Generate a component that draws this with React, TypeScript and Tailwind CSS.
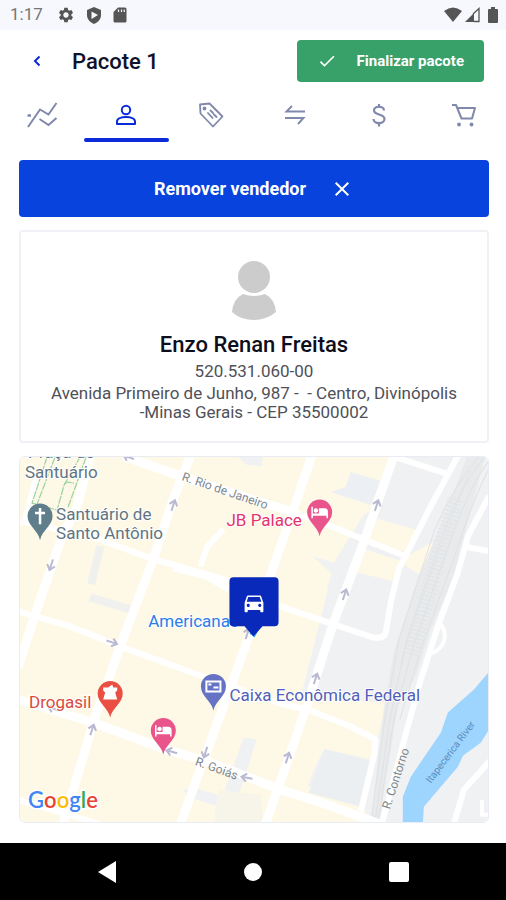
import React, { useState } from 'react';
import { MdCheck, MdClose, MdDirectionsCar, MdHotel, MdSettings } from 'react-icons/md';

type TabId = 'RESUMO' | 'VENDEDOR' | 'OFERTAS' | 'TROCAS' | 'VALORES' | 'CARRINHO';

const ChartIcon = () => (
  <svg width="32" height="28" viewBox="0 0 32 28" fill="none" stroke="currentColor" strokeWidth="2">
    <path d="M2 26 L14 8.500 L22.500 13.500 L30.500 2" />
    <path d="M13.500 18 L22.500 24 L30.500 17" />
    <path d="M1.500 14.500 H5" strokeWidth="2.500" />
  </svg>
);

const PersonIcon = () => (
  <svg width="22" height="22" viewBox="0 0 22 22" fill="none" stroke="currentColor" strokeWidth="2">
    <circle cx="11" cy="6" r="4.200" />
    <path d="M2 20 V17.500 C2 11.500 20 11.500 20 17.500 V20 Z" strokeLinejoin="round" />
  </svg>
);

const TagIcon = () => (
  <svg width="28" height="28" viewBox="0 0 28 28" fill="none" stroke="currentColor" strokeWidth="1.800" strokeLinejoin="round" strokeLinecap="round">
    <path d="M3 3.500 L12.500 2.500 L25.500 15.500 L16 25.500 L3.500 12.500 Z" />
    <circle cx="7.500" cy="7.500" r="1" />
    <path d="M11 12 L15.500 17 M13.500 9.500 L16 12 M17 13.500 L19.500 16" />
  </svg>
);

const SwapIcon = () => (
  <svg width="22" height="22" viewBox="0 0 22 22" fill="none" stroke="currentColor" strokeWidth="1.900">
    <path d="M21 7.500 H2.500 L8 2" />
    <path d="M1 14 H19.500 L14 20" />
  </svg>
);

const DollarIcon = () => (
  <svg width="16" height="24" viewBox="0 0 16 24" fill="none" stroke="currentColor" strokeWidth="2.200">
    <path d="M13 7.500 C13 2.500 3 2.500 3 7.500 C3 12.500 13.500 10.500 13.500 16 C13.500 21.500 2.500 21.500 2.500 16" />
    <path d="M8 1 V4.500 M8 19.500 V23.500" />
  </svg>
);

const CartIcon = () => (
  <svg width="26" height="26" viewBox="0 0 26 26" fill="none" stroke="currentColor" strokeWidth="2" strokeLinejoin="round">
    <path d="M1 3 H5 L10.500 16.500 H21 L24 6 H6.500" />
    <circle cx="8" cy="22.500" r="1.900" fill="currentColor" stroke="none" />
    <circle cx="20.500" cy="22.500" r="1.900" fill="currentColor" stroke="none" />
  </svg>
);

const TABS: { id: TabId; label: string; icon: React.ReactNode }[] = [
  { id: 'RESUMO', label: 'Resumo', icon: <ChartIcon /> },
  { id: 'VENDEDOR', label: 'Vendedor', icon: <PersonIcon /> },
  { id: 'OFERTAS', label: 'Ofertas', icon: <TagIcon /> },
  { id: 'TROCAS', label: 'Trocas', icon: <SwapIcon /> },
  { id: 'VALORES', label: 'Valores', icon: <DollarIcon /> },
  { id: 'CARRINHO', label: 'Carrinho', icon: <CartIcon /> },
];

const StatusBar = () => (
  <div className="flex h-[30px] items-center justify-between bg-[#f7f8fd] pr-2 pl-[10px] text-[#555555]">
    <div className="flex items-center gap-[11px]">
      <span className="w-9 text-[17px] text-[#757575]">1:17</span>
      <MdSettings size={18} />
      <svg width="16" height="17" viewBox="0 0 16 17">
        <path d="M8 0 L15 3 V8 C15 12 12 15.500 8 17 C4 15.500 1 12 1 8 V3 Z" fill="currentColor" />
        <path d="M5.500 4.500 L12 8 L5.500 12 Z" fill="#f7f8fd" />
      </svg>
      <svg width="14" height="16" viewBox="0 0 14 16">
        <path d="M5 0.500 H12 Q13.500 0.500 13.500 2 V14 Q13.500 15.500 12 15.500 H2 Q0.500 15.500 0.500 14 V5 Z" fill="currentColor" />
        <path d="M5.500 2.500 V5 M8.500 2.500 V5 M11.200 2.500 V5" stroke="#f7f8fd" strokeWidth="1.200" />
      </svg>
    </div>
    <div className="flex items-center">
      <svg width="18" height="16" viewBox="0 0 18 16">
        <path d="M0 4 Q9 -3 18 4 L9 15 Z" fill="currentColor" />
      </svg>
      <svg className="ml-[3px]" width="15" height="16" viewBox="0 0 15 16">
        <path d="M0 15 L9 6 V15 Z" fill="currentColor" />
        <path d="M8 7 L14 1.500 V14.500 H9" fill="none" stroke="currentColor" strokeWidth="1.300" />
      </svg>
      <svg className="ml-2" width="10" height="16" viewBox="0 0 10 16">
        <path d="M3 0 H7 V2 H9 Q10 2 10 3 V15 Q10 16 9 16 H1 Q0 16 0 15 V3 Q0 2 1 2 H3 Z" fill="currentColor" />
      </svg>
    </div>
  </div>
);

// Teardrop pin, the tip sits at (0, 0)
const Pin = ({ x, y, color, children }: { x: number; y: number; color: string; children: React.ReactNode }) => (
  <g transform={`translate(${x} ${y})`}>
    <path d="M0 0 C-2 -10 -12.500 -14 -12.500 -24 A12.500 12.500 0 0 1 12.500 -24 C12.500 -14 2 -10 0 0 Z" fill={color} />
    {children}
  </g>
);

const ROADS_WIDE = [
  'M123 457 L177 476 L260 503 L290 512',
  'M90 457 L77 507 L60 543 L35 615 L18 668',
  'M190 457 L173 500 L152 563 L120 647 L95 717 L63 824',
  'M311 457 L293 510 L250 633 L223 707 L180 824',
  'M393 457 L363 543 L333 623 L305 710 L265 824',
  'M18 700 L93 723 L160 748 L210 763 L280 790 L327 805 L378 824',
];

const ROADS = [
  'M38 473 L24 524',
  'M20 522 L93 538 L153 560 L223 580 L280 607 L333 625 L372 638 Q383 640 385 633 L390 603 L398 570 L430 507 L457 457',
  'M173 569 L205 577 L228 590',
  'M290 512 L330 527 L405 557',
  'M18 612 L70 627 L120 647 L197 675 L283 705 L307 710 L350 727 L375 740 L373 757 L360 812',
  'M397 459 L447 475',
  'M488 497 L467 537 L457 573 L437 627 L420 680 L407 727 L381 824',
  'M467 548 L488 552',
  'M223 530 L207 547 L200 567',
  'M18 800 L102 825',
  'M490 760 L463 790 L453 824',
];

const LANES = [
  'M439 624 Q446 632 443 642 Q440 650 431 654',
  'M481 800 V815 H488',
];

// x, y, rotation of the one-way arrows
const ARROWS = [
  [173, 506, 18],
  [51, 566, 198],
  [376, 506, 18],
  [344, 595, 18],
  [315, 679, 18],
  [112, 643, 108],
  [247, 634, 18],
  [92, 730, 18],
  [53, 709, -70],
  [171, 752, -75],
  [205, 753, 198],
  [246, 778, -80],
  [287, 758, 18],
  [128, 458, -70],
];

const SellerMap = () => (
  <svg className="block h-auto w-full" viewBox="20 458 467 364" role="img" aria-label="Mapa">
    <rect x="18" y="456" width="472" height="370" fill="#fef9e6" />

    {/* Grey blocks */}
    <g fill="#eff1f3">
      <path d="M388 456 H490 V826 H373 L362 808 L305 785 L324 749 L370 760 L380 720 L400 704 L300 698 L335 560 L363 516 L380 505 Z" />
      <path d="M350 473 L380 482 L370 506 L330 493 L345 488 Z" fill="#eceff3" />
      <path d="M312 557 L357 570 L340 590 L326 590 L331 574 Z" />
      <path d="M236 456 H262 V467 L246 466 Z" />
      <path d="M243 738 L256 740 L243 781 L228 824 H215 L222 808 L190 798 L182 790 L198 789 L222 797 Z" />
      <path d="M218 790 L260 795 L263 824 H213 Z" fill="#f7f5e9" />
    </g>
    <g fill="#fef9e6">
      <path d="M367 517 L417 531 L406 553 L360 540 Z" />
      <path d="M427 545 L438 542 L418 575 L404 566 L407 557 Z" />
      <path d="M358 548 L401 562 L393 582 L355 573 Z" />
      <path d="M311 706 L384 705 L378 735 L368 759 L322 749 L305 792 L283 785 Z" />
      <path d="M279 796 L302 803 L297 824 H268 Z" />
    </g>
    <path d="M324 750 L370 761 L360 807 L308 793 Z" fill="#eceff2" />
    <path d="M100 547 L91 585 M90 598 L130 610" fill="none" stroke="#f0f0ee" strokeWidth="8" />

    {/* Railway yard */}
    <path d="M466 458 L484 458 L470 510 L453 577 L430 630 L415 676 L397 707 L378 824 H370 L383 710 L393 653 L417 580 L442 520 Z" fill="#e8eaec" />
    <g fill="none" stroke="#dfe2e4" strokeWidth="1">
      <path d="M484 458 Q462 482 442 535 L406 640 L389 720 L374 824" />
      <path d="M488 462 Q470 484 450 540 L412 648 L393 720 L377 824" />
      <path d="M478 458 Q456 482 434 530 L398 640 L384 720 L370 824" />
      <path d="M488 470 Q474 495 458 545 L420 650 L399 720" />
      <path d="M469 472 L428 580 L400 663" strokeDasharray="2 2" />
    </g>
    <path d="M454 500 L409 658" stroke="#e1e4e6" strokeWidth="16" strokeDasharray="1 3" fill="none" />

    <path d="M490 670 L473 690 L447 713 L440 733 L410 777 L402 797 V824 H422 L423 807 L457 767 L462 756 L480 743 L490 727 Z" fill="#9ed5ff" />

    <g fill="none" stroke="#ffffff" strokeLinejoin="round">
      {ROADS_WIDE.map(d => <path key={d} d={d} strokeWidth="9" />)}
      {ROADS.map(d => <path key={d} d={d} strokeWidth="6" />)}
      {LANES.map(d => <path key={d} d={d} strokeWidth="4" />)}
    </g>

    {/* Square footpaths */}
    <g fill="none" stroke="#9bd1a0" strokeWidth="1.200" strokeDasharray="8 1">
      <path d="M47 458 L32 504 L57 511 L64 486 L80 458" />
      <path d="M55 458 L37 505 M86 458 L68 508 M64 485 L68 483 L74 484" />
    </g>

    <g fill="none" stroke="#b9b9d2" strokeWidth="2">
      {ARROWS.map(([x, y, r]) => (
        <path key={`${x}-${y}`} d="M0 6 V-4 M-4 0 L0 -5 L4 0" transform={`translate(${x} ${y}) rotate(${r})`} />
      ))}
    </g>

    {/* Street names */}
    <g fill="#80868b" fontSize="12">
      <text x="181" y="481" transform="rotate(19 181 481)">R. Rio de Janeiro</text>
      <text x="194" y="765" transform="rotate(20 194 765)">R. Goiás</text>
      <text x="389" y="810" transform="rotate(-72 389 810)">R. Contorno</text>
      <text x="430" y="784" transform="rotate(-53 430 784)" fontSize="10" fill="#5b8cba">Itapecerica River</text>
    </g>

    {/* Places */}
    <g fontSize="17" stroke="#ffffff" strokeWidth="2" paintOrder="stroke" strokeLinejoin="round">
      <g fill="#60757f">
        <text x="28" y="459">Praça do</text>
        <text x="25" y="479">Santuário</text>
        <text x="56" y="521">Santuário de</text>
        <text x="56" y="540">Santo Antônio</text>
      </g>
      <text x="226" y="527" fill="#e5336d">JB Palace</text>
      <text x="148" y="628" fill="#2b7de9">Americanas</text>
      <text x="229" y="701" fill="#525fb8">Caixa Econômica Federal</text>
      <text x="29" y="708" fill="#db4a3f">Drogasil</text>
    </g>

    <Pin x={40} y={541} color="#607d8b">
      <path d="M0 -32 V-16 M-5 -27 H5" stroke="#ffffff" strokeWidth="2.500" />
    </Pin>
    <Pin x={319} y={537} color="#e9548b">
      <MdHotel x={-9} y={-33} size={18} color="#ffffff" />
    </Pin>
    <Pin x={163} y={755} color="#e9548b">
      <MdHotel x={-9} y={-33} size={18} color="#ffffff" />
    </Pin>
    <Pin x={110} y={718} color="#ea4f43">
      <path d="M-7 -30 H-2 L2 -33 L3 -30 H7 V-27 L5 -25 L7 -18 H-7 L-5 -25 L-7 -27 Z" fill="#ffffff" />
    </Pin>
    <Pin x={213} y={711} color="#6673c4">
      <path d="M-7 -29 H7 V-19 H-7 Z" fill="none" stroke="#ffffff" strokeWidth="2" />
      <path d="M-5 -26 H-2 M0 -23 H5" stroke="#ffffff" strokeWidth="2" />
    </Pin>

    {/* Seller marker */}
    <path d="M249 634 L262 624 L254 638 Z" fill="#4aa3ff" />
    <path d="M233 578 H274 Q278 578 278 582 V623 Q278 627 274 627 H262 L253 637 L244 627 H233 Q229 627 229 623 V582 Q229 578 233 578 Z" fill="#0829b9" />
    <MdDirectionsCar x={241} y={591} size={25} color="#ffffff" />

    <text x="28" y="808" fontSize="22" className="font-['Lato',sans-serif]" stroke="#ffffff" strokeWidth="3" paintOrder="stroke" fontWeight="600">
      <tspan fill="#4285f4">G</tspan>
      <tspan fill="#ea4335">o</tspan>
      <tspan fill="#fbbc05">o</tspan>
      <tspan fill="#4285f4">g</tspan>
      <tspan fill="#34a853">l</tspan>
      <tspan fill="#ea4335">e</tspan>
    </text>
  </svg>
);

const App: React.FC = () => {
  const [tab, setTab] = useState<TabId>('VENDEDOR');

  return (
    <div className="flex min-h-screen flex-col bg-white font-['Roboto',sans-serif] text-[#10122b]">
      <StatusBar />

      <header className="flex h-[62px] items-center pr-[22px] pl-[26px]">
        <button aria-label="Voltar" className="flex h-6 w-[22px] items-center justify-center text-[#0b2bd0]">
          <svg width="8" height="12" viewBox="0 0 8 12" fill="none" stroke="currentColor" strokeWidth="2">
            <path d="M6.500 1.500 L2 6 L6.500 10.500" />
          </svg>
        </button>
        <h1 className="ml-6 text-[22px] font-medium">Pacote 1</h1>
        <button className="ml-auto flex h-[42px] items-center gap-5 rounded bg-[#38a169] pr-5 pl-5 text-[15px] font-bold text-white">
          <MdCheck size={20} />
          Finalizar pacote
        </button>
      </header>

      <nav className="grid h-[50px] grid-cols-6">
        {TABS.map(t => (
          <button
            key={t.id}
            aria-label={t.label}
            onClick={() => setTab(t.id)}
            className={`flex flex-col items-center ${tab === t.id ? 'text-[#0b2bd8]' : 'text-[#8088ac]'}`}
          >
            <span className="flex h-[46px] items-center justify-center">{t.icon}</span>
            <span className={`h-1 w-full rounded-full ${tab === t.id ? 'bg-[#0b2bd8]' : 'bg-transparent'}`} />
          </button>
        ))}
      </nav>

      <main className="flex flex-col gap-[13px] pt-[18px] pr-[17px] pb-5 pl-[19px]">
        <button className="flex h-[57px] items-center justify-center gap-6 rounded bg-[#0743dc] text-lg font-bold text-white">
          Remover vendedor
          <MdClose size={24} />
        </button>

        <section className="flex flex-col items-center rounded border-2 border-[#eff1f6] px-4 pt-[29px] pb-[19px] text-center text-[17px] leading-[19px] text-[#4f5058]">
          <svg width="46" height="60" viewBox="0 0 46 60" fill="#cccccc">
            <circle cx="23" cy="16" r="16" />
            <path d="M12 33 Q23 37 34 33 Q44 38 45 51 Q35 59 23 59 Q10 59 1 51 Q2 38 12 33 Z" />
          </svg>
          <h2 className="mt-[10px] text-[22px] leading-7 font-medium text-[#0c0e20]">Enzo Renan Freitas</h2>
          <p className="mt-[3px]">520.531.060-00</p>
          <p className="mt-[3px] whitespace-pre-wrap">
            Avenida Primeiro de Junho, 987 -  - Centro, Divinópolis
            <br />
            -Minas Gerais - CEP 35500002
          </p>
        </section>

        <section className="overflow-hidden rounded-md border border-[#e9ecf2]">
          <SellerMap />
        </section>
      </main>

      <footer className="mt-auto flex h-[58px] items-center justify-around bg-black px-[34px] text-white">
        <button aria-label="Voltar" className="flex w-6 justify-center">
          <svg width="18" height="22" viewBox="0 0 18 22" fill="currentColor"><path d="M18 0 V22 L0 11 Z" /></svg>
        </button>
        <button aria-label="Início" className="flex w-6 justify-center">
          <span className="h-[18px] w-[18px] rounded-full bg-white" />
        </button>
        <button aria-label="Recentes" className="flex w-6 justify-center">
          <span className="h-5 w-5 rounded-[2px] bg-white" />
        </button>
      </footer>
    </div>
  );
};

export default App;
